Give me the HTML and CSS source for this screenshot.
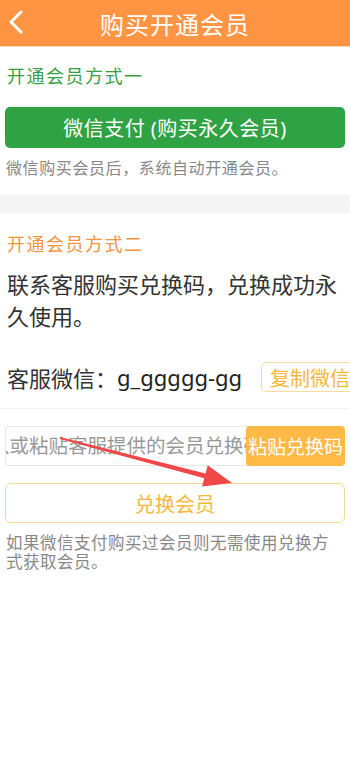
FILE: index.html
```
<!DOCTYPE html>
<html lang="zh-CN">
<head>
  <meta charset="UTF-8" />
  <meta name="viewport" content="width=device-width, initial-scale=1.0"/>
  <title>购买开通会员</title>
  <link rel="stylesheet" href="styles.css">
</head>
<body>
  <div class="topbar">
    <a class="back">
      <svg width="16" height="24" viewBox="0 0 16 24"><path d="M13 2 L3 12 L13 22" fill="none" stroke="#fff" stroke-width="3" stroke-linecap="round" stroke-linejoin="round"/></svg>
    </a>
    <h1>购买开通会员</h1>
  </div>

  <div class="section">
    <h3 class="sec-title green">开通会员方式一</h3>
    <button class="btn-pay">微信支付 (购买永久会员)</button>
    <p class="tip">微信购买会员后，系统自动开通会员。</p>
  </div>

  <div class="band"></div>

  <div class="section">
    <h3 class="sec-title orange">开通会员方式二</h3>
    <p class="desc">联系客服购买兑换码，兑换成功永久使用。</p>
    <div class="wx-row">
      <span class="wx-label">客服微信：</span><span class="wx-id">g_ggggg-gg</span>
      <button class="btn-copy">复制微信号</button>
    </div>
  </div>

  <div class="divider"></div>

  <div class="section">
    <div class="code-row">
      <div class="code-input"><span>请输入或粘贴客服提供的会员兑换码</span></div>
      <button class="btn-paste">粘贴兑换码</button>
    </div>
    <button class="btn-redeem">兑换会员</button>
    <p class="note">如果微信支付购买过会员则无需使用兑换方式获取会员。</p>
  </div>

  <svg class="arrow" width="350" height="763" viewBox="0 0 350 763">
    <polygon points="60,437 205.5,473.5 207.7,465.3 232,483 202.1,486.5 204.3,478.3 60,439" fill="#f04848"/>
  </svg>
</body>
</html>
```

FILE: styles.css
```
* {
  box-sizing: border-box;
}

body {
  margin: 0;
  font-family: "Noto Sans", "Noto Sans CJK SC", sans-serif;
  background: #fff;
  color: #333;
  width: 350px;
  min-height: 763px;
  overflow: hidden;
  position: relative;
}

.topbar {
  height: 47px;
  background: #ff9443;
  display: flex;
  align-items: center;
  justify-content: center;
  position: relative;
  border-bottom: 1px solid #ffd9bd;
}

.topbar h1 {
  margin: 0;
  color: #fff;
  font-size: 24px;
  font-weight: 400;
  letter-spacing: 1px;
}

.back {
  position: absolute;
  left: 8px;
  top: 10px;
  display: flex;
}

.section {
  padding: 0 5px;
}

.sec-title {
  margin: 0;
  font-size: 18px;
  font-weight: 400;
  letter-spacing: 1.5px;
  line-height: 24px;
  padding-left: 2px;
}

.green {
  color: #3a9e45;
  margin-top: 17px;
}

.orange {
  color: #f39440;
  margin-top: 19px;
}

.btn-pay {
  display: block;
  width: 100%;
  height: 41px;
  margin-top: 19px;
  border: none;
  border-radius: 5px;
  background: #2fa343;
  color: #fff;
  font-family: inherit;
  font-size: 20px;
  letter-spacing: 0.5px;
}

.tip {
  margin: 9px 0 0;
  font-size: 16px;
  letter-spacing: 0.6px;
  line-height: 22px;
  color: #888;
  padding-left: 1px;
}

.band {
  height: 18px;
  margin-top: 16px;
  background: #f5f5f5;
}

.desc {
  margin: 12px 0 0;
  padding-left: 2px;
  font-size: 22px;
  line-height: 32px;
  color: #333;
}

.wx-row {
  display: flex;
  align-items: center;
  margin-top: 30px;
  padding-left: 2px;
  white-space: nowrap;
  font-size: 22px;
  height: 30px;
}

.wx-id {
  color: #222;
}

.btn-copy {
  flex-shrink: 0;
  margin-left: 19px;
  height: 30px;
  padding: 0 8px;
  border: 1px solid #f6dc9c;
  border-radius: 5px;
  background: #fff;
  color: #f6b73c;
  font-family: inherit;
  font-size: 20px;
}

.divider {
  height: 1px;
  background: #f0f0f0;
  margin-top: 16px;
}

.code-row {
  display: flex;
  margin-top: 17px;
  height: 40px;
  overflow: hidden;
}

.code-input {
  flex: 1;
  border: 1px solid #e6e6e6;
  border-right: none;
  border-radius: 4px 0 0 4px;
  overflow: hidden;
  white-space: nowrap;
  display: flex;
  align-items: center;
}

.code-input span {
  margin-left: -55px;
  font-size: 19.5px;
  line-height: 24px;
  color: #999;
}

.btn-paste {
  width: 99px;
  flex-shrink: 0;
  margin-left: -6px;
  border: none;
  border-radius: 4px;
  background: #ffb947;
  color: #fff;
  font-family: inherit;
  font-size: 19px;
  padding: 0;
  white-space: nowrap;
}

.btn-redeem {
  display: block;
  width: 100%;
  height: 40px;
  margin-top: 17px;
  border: 1px solid #f5d98e;
  border-radius: 6px;
  background: #fff;
  color: #f6b93b;
  font-family: inherit;
  font-size: 20px;
}

.note {
  margin: 10px 0 0;
  padding-left: 1px;
  font-size: 16.5px;
  letter-spacing: 0.5px;
  line-height: 19px;
  color: #888;
}

.arrow {
  position: absolute;
  left: 0;
  top: 0;
  pointer-events: none;
}
```
